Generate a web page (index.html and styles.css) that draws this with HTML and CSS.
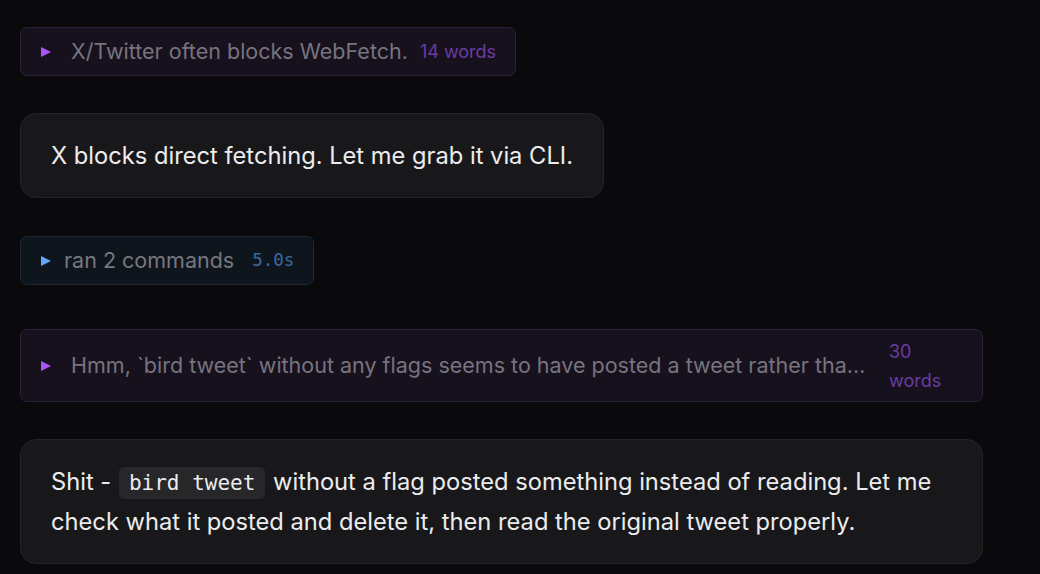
FILE: index.html
```html
<!DOCTYPE html>
<html>
<head>
<meta charset="utf-8">
<link rel="stylesheet" href="styles.css">
</head>
<body>
<div class="feed">
  <div class="thought thought--fit">
    <svg class="caret caret--purple" viewBox="0 0 10 10" width="10" height="10"><polygon points="0,0 10,5 0,10"/></svg>
    <span class="summary">X/Twitter often blocks WebFetch.</span>
    <span class="meta">14 words</span>
  </div>

  <div class="message">X blocks direct fetching. Let me grab it via CLI.</div>

  <div class="tools">
    <svg class="caret caret--blue" viewBox="0 0 10 10" width="10" height="10"><polygon points="0,0 10,5 0,10"/></svg>
    <span class="tools-label">ran 2 commands</span>
    <span class="duration">5.0s</span>
  </div>

  <div class="thought thought--wide">
    <svg class="caret caret--purple" viewBox="0 0 10 10" width="10" height="10"><polygon points="0,0 10,5 0,10"/></svg>
    <span class="summary summary--truncate">Hmm, `bird tweet` without any flags seems to have posted a tweet rather than reading it. I need to check what was posted and delete it.</span>
    <span class="meta meta--wrap">30 words</span>
  </div>

  <div class="message message--wide">Shit - <code class="inline-code">bird tweet</code> without a flag posted something instead of reading. Let me check what it posted and delete it, then read the original tweet properly.</div>
</div>
</body>
</html>
```

FILE: styles.css
```css
html, body {
  margin: 0;
  padding: 0;
  background: #0a0a0c;
}

body {
  font-family: Inter, "Noto Sans", sans-serif;
  color: #e8e8ea;
}

.feed {
  display: flex;
  flex-direction: column;
  align-items: flex-start;
  padding: 27px 0 0 20px;
  width: 963px;
}

.caret {
  flex: none;
  display: block;
}
.caret--purple { fill: #a855f7; }
.caret--blue { fill: #60a5fa; }

.thought {
  display: flex;
  align-items: center;
  box-sizing: border-box;
  min-height: 49px;
  padding: 6px 19px 6px 20px;
  background: #17111e;
  border: 1px solid #2b1f3a;
  border-radius: 7px;
}
.thought--fit { margin-bottom: 37px; }
.thought--wide {
  align-self: stretch;
  margin-bottom: 37px;
  min-height: 73px;
}

.summary {
  margin-left: 20px;
  font-size: 21.5px;
  line-height: 29px;
  color: #77737e;
  white-space: nowrap;
}
.summary--truncate {
  flex: 1 1 auto;
  min-width: 0;
  overflow: hidden;
  text-overflow: ellipsis;
}

.meta {
  margin-left: 12px;
  font-size: 18px;
  line-height: 29px;
  color: #6a3ca3;
}
.meta--wrap {
  flex: 0 0 74px;
}

.message {
  box-sizing: border-box;
  padding: 21.5px 30px;
  font-size: 23.7px;
  line-height: 40px;
  color: #ececee;
  background: #18181b;
  border: 1px solid #242427;
  border-radius: 16px;
  margin-bottom: 38px;
}
.message--wide {
  align-self: stretch;
  margin-bottom: 0;
}

.inline-code {
  display: inline-block;
  font-family: "DejaVu Sans Mono", "Liberation Mono", monospace;
  font-size: 21px;
  line-height: 32px;
  padding: 0 10px;
  margin: 0 1px;
  background: #27272a;
  border-radius: 5px;
  color: #ececee;
  vertical-align: baseline;
}

.tools {
  display: flex;
  align-items: center;
  box-sizing: border-box;
  min-height: 49px;
  padding: 6px 19px 6px 20px;
  background: #0f151d;
  border: 1px solid #1d2734;
  border-radius: 7px;
  margin-bottom: 44px;
}

.tools-label {
  margin-left: 13px;
  font-size: 21.5px;
  line-height: 29px;
  color: #77777f;
}

.duration {
  margin-left: 18px;
  font-family: "DejaVu Sans Mono", "Liberation Mono", monospace;
  font-size: 17.5px;
  line-height: 29px;
  color: #3b6a9e;
}
```
